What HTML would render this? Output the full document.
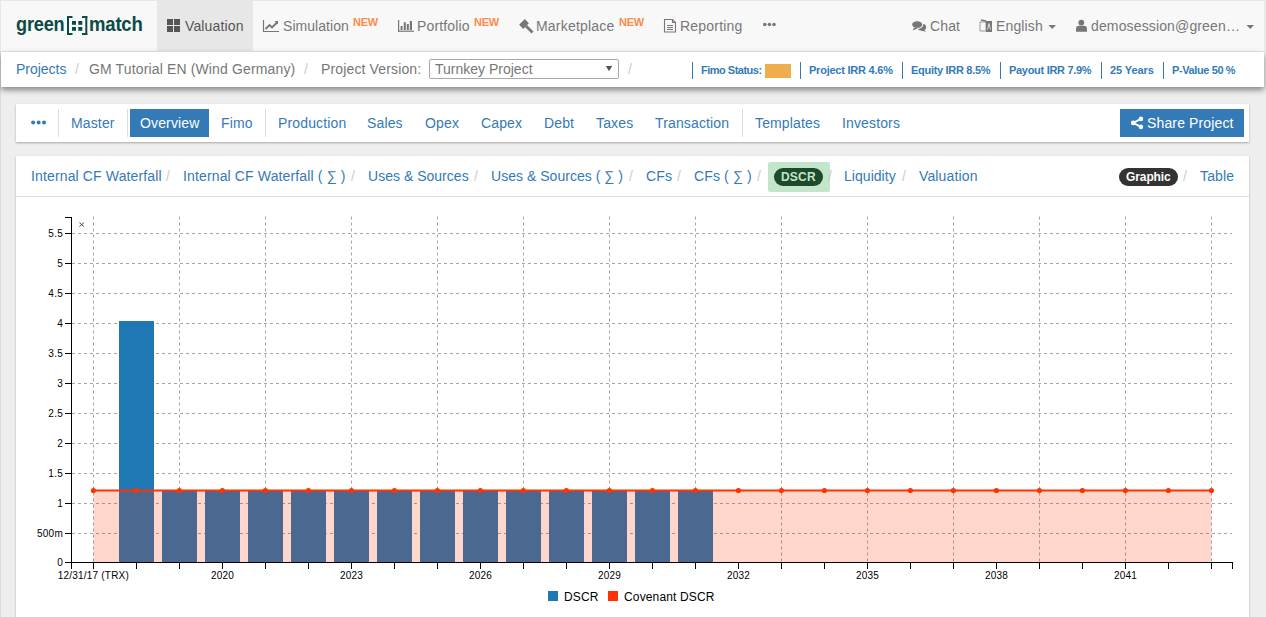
<!DOCTYPE html>
<html><head><meta charset="utf-8">
<style>
*{box-sizing:border-box}
html,body{margin:0;padding:0}
body{width:1266px;height:617px;overflow:hidden;background:#eeeeee;font-family:"Liberation Sans",sans-serif;font-size:14px;position:relative}
.a{position:absolute;white-space:nowrap}
.t{position:absolute;white-space:nowrap;font-size:14px;line-height:18px;letter-spacing:0.14px}
.n{color:#777;top:17px}
.new{position:absolute;top:16px;font-size:11px;font-weight:bold;color:#ff8a4c;line-height:12px;white-space:nowrap}
.b{top:60px}
.kpi{position:absolute;top:64px;font-size:11px;font-weight:bold;color:#337ab7;line-height:12px;white-space:nowrap}
.ks{position:absolute;top:62px;width:1px;height:17px;background:#337ab7}
.tab{color:#337ab7;top:114px}
.sep{position:absolute;top:109px;width:1px;height:28px;background:#ddd}
.h{color:#337ab7;top:167px}
.sl{color:#ccc;top:167px}
svg{position:absolute;left:0;top:0;overflow:visible}
</style></head><body>

<div class="a" style="left:0;top:0;width:1px;height:617px;background:#dcdcdc"></div>
<!-- NAVBAR -->
<div class="a" style="left:0;top:0;width:1265px;height:52px;background:#f8f8f8;border:1px solid #e7e7e7"></div>
<div class="a" style="left:157px;top:1px;width:96px;height:50px;background:#e7e7e7"></div>

<!-- logo -->
<div class="a" style="left:16px;top:12px;font-size:19.5px;font-weight:bold;color:#0a4b45;line-height:24px;letter-spacing:-0.2px;transform:scaleX(0.93);transform-origin:0 0">green</div>
<svg width="1266" height="60">
 <g fill="#0a4b45">
  <rect x="67" y="16" width="2" height="19"/><rect x="67" y="16" width="5.5" height="2"/><rect x="67" y="33" width="5.5" height="2"/>
  <rect x="85.3" y="16" width="2" height="19"/><rect x="82" y="16" width="5.3" height="2"/><rect x="82" y="33" width="5.3" height="2"/>
  <rect x="72" y="21" width="4" height="3.8"/><rect x="78.3" y="21" width="4" height="3.8"/>
  <rect x="72" y="27" width="4" height="3.8"/><rect x="78.3" y="27" width="4" height="3.8"/>
 </g>
</svg>
<div class="a" style="left:89px;top:12px;font-size:19.5px;font-weight:bold;color:#0a4b45;line-height:24px;letter-spacing:-0.2px;transform:scaleX(0.95);transform-origin:0 0">match</div>

<!-- nav icons -->
<svg width="1266" height="60">
 <g fill="#555"><rect x="167" y="19" width="6" height="6"/><rect x="174" y="19" width="6" height="6"/><rect x="167" y="26" width="6" height="6"/><rect x="174" y="26" width="6" height="6"/></g>
 <g fill="none" stroke="#777">
  <path d="M263.5,20V31.5H279" stroke-width="1.2"/>
  <path d="M265.5,29L269.5,25L272,27.5L277,22.5" stroke-width="1.9"/>
 </g>
 <path d="M274.5,21H278V24.5Z" fill="#777"/>
 <g fill="#777">
  <rect x="398" y="20" width="1.2" height="11.5"/><rect x="398" y="30.6" width="16" height="1.2"/>
  <rect x="400.6" y="26" width="2" height="4"/><rect x="403.8" y="22.2" width="2" height="7.8"/><rect x="406.8" y="24" width="2" height="6"/><rect x="409.8" y="21" width="2.2" height="9"/>
 </g>
 <g fill="#777" transform="translate(524,24) rotate(-45)">
  <rect x="-4" y="-2.9" width="8" height="5.8"/>
  <rect x="-1.4" y="2.5" width="2.8" height="9.5"/>
 </g>
 <g fill="none" stroke="#777" stroke-width="1.1">
  <path d="M664.5,19.5H672.5L675.5,22.5V32H664.5Z"/>
  <path d="M672.5,19.5V22.5H675.5"/>
  <path d="M667,25.5H673M667,27.5H673M667,29.5H673"/>
 </g>
 <g fill="#777"><circle cx="764.8" cy="24.5" r="1.8"/><circle cx="769.4" cy="24.5" r="1.8"/><circle cx="774" cy="24.5" r="1.8"/></g>
 <g fill="#777">
  <ellipse cx="921.8" cy="27.2" rx="4.3" ry="3.4"/>
  <path d="M923.5,29.5L926.2,31.8L920.5,30.4Z"/>
  <ellipse cx="917.2" cy="24.6" rx="5.6" ry="3.9" stroke="#f8f8f8" stroke-width="1.1"/>
  <path d="M914,27.5L912.6,30.6L917.5,28.4Z"/>
 </g>
 <g>
  <path d="M980,22H986V31H980Z" fill="none" stroke="#999" stroke-width="1"/>
  <path d="M986,21H992V32H986Z" fill="#777"/>
  <path d="M981,20L986,21" stroke="#777" stroke-width="1.4"/>
  <path d="M987.5,29.5L989,23.5L990.5,29.5" fill="none" stroke="#ddd" stroke-width="1"/>
 </g>
 <path d="M1048.5,25H1056L1052.25,29Z" fill="#777"/>
 <g fill="#777"><circle cx="1081.3" cy="22.6" r="2.9"/><path d="M1076,31.8V28.5Q1076,26 1078.5,25.8H1084.5Q1087,26 1087,28.5V31.8Z"/></g>
 <path d="M1246.5,25H1254L1250.25,29Z" fill="#777"/>
</svg>

<div class="t n" style="left:185px;color:#555">Valuation</div>
<div class="t n" style="left:283px;letter-spacing:0.05px">Simulation</div><div class="new" style="left:353px;letter-spacing:-0.3px">NEW</div>
<div class="t n" style="left:417px">Portfolio</div><div class="new" style="left:474px;letter-spacing:-0.3px">NEW</div>
<div class="t n" style="left:536px;letter-spacing:0.2px">Marketplace</div><div class="new" style="left:619px;letter-spacing:-0.3px">NEW</div>
<div class="t n" style="left:680px;letter-spacing:0.2px">Reporting</div>
<div class="t n" style="left:930px">Chat</div>
<div class="t n" style="left:996px">English</div>
<div class="t n" style="left:1091px">demosession@green…</div>

<!-- BREADCRUMB BAR -->
<div class="a" style="left:1px;top:52px;width:1263px;height:35px;background:#fff;box-shadow:0 3px 6px rgba(0,0,0,.45)"></div>
<div class="t b" style="left:16px;color:#337ab7;letter-spacing:-0.02px">Projects</div>
<div class="t b" style="left:75px;color:#ccc">/</div>
<div class="t b" style="left:89px;color:#777">GM Tutorial EN (Wind Germany)</div>
<div class="t b" style="left:304px;color:#ccc">/</div>
<div class="t b" style="left:321px;color:#777">Project Version:</div>
<div class="a" style="left:429px;top:59px;width:190px;height:20px;border:1px solid #a9a9a9;border-radius:2px;background:#fff"></div>
<div class="t" style="left:435px;top:60px;color:#777;letter-spacing:0">Turnkey Project</div>
<svg width="1266" height="100"><path d="M605.8,66H612.2L609,71.2Z" fill="#555"/></svg>
<div class="t b" style="left:628px;color:#ccc">/</div>

<div class="ks" style="left:692px"></div>
<div class="kpi" style="left:701px;letter-spacing:-0.5px">Fimo Status:</div>
<div class="a" style="left:765px;top:64px;width:26px;height:14px;background:#f0ad4e"></div>
<div class="ks" style="left:800px"></div>
<div class="kpi" style="left:809px;letter-spacing:-0.23px">Project IRR 4.6%</div>
<div class="ks" style="left:902px"></div>
<div class="kpi" style="left:911px;letter-spacing:-0.3px">Equity IRR 8.5%</div>
<div class="ks" style="left:1000px"></div>
<div class="kpi" style="left:1009px;letter-spacing:-0.3px">Payout IRR 7.9%</div>
<div class="ks" style="left:1101px"></div>
<div class="kpi" style="left:1110px;letter-spacing:-0.08px">25 Years</div>
<div class="ks" style="left:1163px"></div>
<div class="kpi" style="left:1172px;letter-spacing:-0.39px">P-Value 50 %</div>

<!-- CARD 1 -->
<div class="a" style="left:16px;top:104px;width:1233px;height:38px;background:#fff;box-shadow:0 1px 2px rgba(0,0,0,.3)"></div>
<svg width="1266" height="200"><g fill="#337ab7"><circle cx="33.1" cy="122.4" r="2"/><circle cx="38.6" cy="122.4" r="2"/><circle cx="44" cy="122.4" r="2"/></g></svg>
<div class="sep" style="left:58px"></div>
<div class="t tab" style="left:71px">Master</div>
<div class="sep" style="left:127px"></div>
<div class="a" style="left:130px;top:109px;width:79px;height:28px;background:#337ab7"></div>
<div class="t tab" style="left:140px;color:#fff">Overview</div>
<div class="t tab" style="left:221px">Fimo</div>
<div class="sep" style="left:265px"></div>
<div class="t tab" style="left:278px">Production</div>
<div class="t tab" style="left:367px">Sales</div>
<div class="t tab" style="left:425px">Opex</div>
<div class="t tab" style="left:481px">Capex</div>
<div class="t tab" style="left:544px">Debt</div>
<div class="t tab" style="left:596px">Taxes</div>
<div class="t tab" style="left:655px">Transaction</div>
<div class="sep" style="left:742px"></div>
<div class="t tab" style="left:755px">Templates</div>
<div class="t tab" style="left:842px">Investors</div>
<div class="a" style="left:1120px;top:109px;width:124px;height:28px;background:#337ab7"></div>
<svg width="1266" height="200"><g fill="#fff" stroke="#fff"><circle cx="1133.2" cy="122.9" r="2.3" stroke="none"/><circle cx="1140.9" cy="118.9" r="2.3" stroke="none"/><circle cx="1140.9" cy="126.9" r="2.3" stroke="none"/><path d="M1133.2,122.9L1140.9,118.9M1133.2,122.9L1140.9,126.9" stroke-width="1.8" fill="none"/></g></svg>
<div class="t tab" style="left:1147px;color:#fff">Share Project</div>

<!-- CARD 2 -->
<div class="a" style="left:16px;top:156px;width:1233px;height:470px;background:#fff;box-shadow:0 1px 2px rgba(0,0,0,.3)"></div>
<div class="a" style="left:16px;top:196px;width:1233px;height:1px;background:#ddd"></div>
<div class="t h" style="left:31px">Internal CF Waterfall</div><div class="t sl" style="left:166px">/</div>
<div class="t h" style="left:183px">Internal CF Waterfall ( ∑ )</div><div class="t sl" style="left:351px">/</div>
<div class="t h" style="left:368px;letter-spacing:0.02px">Uses &amp; Sources</div><div class="t sl" style="left:474px">/</div>
<div class="t h" style="left:491px;letter-spacing:0.03px">Uses &amp; Sources ( ∑ )</div><div class="t sl" style="left:629px">/</div>
<div class="t h" style="left:646px">CFs</div><div class="t sl" style="left:677px">/</div>
<div class="t h" style="left:694px">CFs ( ∑ )</div><div class="t sl" style="left:757px">/</div>
<div class="a" style="left:768px;top:162px;width:62px;height:30px;background:#c3e6cb;border-radius:2px"></div>
<div class="a" style="left:774px;top:168px;width:49px;height:18px;background:#1d4a2a;border-radius:9px"></div>
<div class="a" style="left:781px;top:169px;font-size:12px;font-weight:bold;line-height:16px;color:#c3e6cb;letter-spacing:0.2px">DSCR</div>
<div class="t sl" style="left:828px">/</div>
<div class="t h" style="left:844px;letter-spacing:0.04px">Liquidity</div><div class="t sl" style="left:902px">/</div>
<div class="t h" style="left:919px">Valuation</div>
<div class="a" style="left:1119px;top:168px;width:59px;height:18px;background:#333;border-radius:9px"></div>
<div class="a" style="left:1126px;top:169px;font-size:12px;font-weight:bold;line-height:16px;color:#fff;letter-spacing:-0.1px">Graphic</div>
<div class="t sl" style="left:1183px">/</div>
<div class="t h" style="left:1200px">Table</div>

<!--CHART-->
<svg width="1266" height="617" style="position:absolute;left:0;top:0">
<g stroke="#a6a6a6" stroke-width="1" stroke-dasharray="3,3" shape-rendering="crispEdges" fill="none">
<path d="M72,533.5H1232"/>
<path d="M72,503.5H1232"/>
<path d="M72,473.5H1232"/>
<path d="M72,443.5H1232"/>
<path d="M72,413.5H1232"/>
<path d="M72,383.5H1232"/>
<path d="M72,353.5H1232"/>
<path d="M72,323.5H1232"/>
<path d="M72,293.5H1232"/>
<path d="M72,263.5H1232"/>
<path d="M72,233.5H1232"/>
<path d="M93.5,216.5V562" shape-rendering="auto"/>
<path d="M179.5,216.5V562" shape-rendering="auto"/>
<path d="M265.5,216.5V562" shape-rendering="auto"/>
<path d="M351.5,216.5V562" shape-rendering="auto"/>
<path d="M437.5,216.5V562" shape-rendering="auto"/>
<path d="M523.5,216.5V562" shape-rendering="auto"/>
<path d="M609.5,216.5V562" shape-rendering="auto"/>
<path d="M695.5,216.5V562" shape-rendering="auto"/>
<path d="M781.5,216.5V562" shape-rendering="auto"/>
<path d="M867.5,216.5V562" shape-rendering="auto"/>
<path d="M953.5,216.5V562" shape-rendering="auto"/>
<path d="M1039.5,216.5V562" shape-rendering="auto"/>
<path d="M1125.5,216.5V562" shape-rendering="auto"/>
<path d="M1211.5,216.5V562" shape-rendering="auto"/>
</g>
<g fill="#1f77b4" shape-rendering="crispEdges">
<rect x="119" y="321" width="35" height="241"/>
<rect x="162" y="491" width="35" height="71"/>
<rect x="205" y="491" width="35" height="71"/>
<rect x="248" y="491" width="35" height="71"/>
<rect x="291" y="491" width="35" height="71"/>
<rect x="334" y="491" width="35" height="71"/>
<rect x="377" y="491" width="35" height="71"/>
<rect x="420" y="491" width="35" height="71"/>
<rect x="463" y="491" width="35" height="71"/>
<rect x="506" y="491" width="35" height="71"/>
<rect x="549" y="491" width="35" height="71"/>
<rect x="592" y="491" width="35" height="71"/>
<rect x="635" y="491" width="35" height="71"/>
<rect x="678" y="491" width="35" height="71"/>
</g>
<rect x="93.4" y="490.5" width="1118.0" height="72.0" fill="#ff3300" fill-opacity="0.2"/>
<path d="M93.4,490.5H1211.4" stroke="#ff3300" stroke-width="2" fill="none"/>
<circle cx="93.4" cy="490.5" r="2.6" fill="#ff3300"/>
<circle cx="136.4" cy="490.5" r="2.6" fill="#ff3300"/>
<circle cx="179.4" cy="490.5" r="2.6" fill="#ff3300"/>
<circle cx="222.4" cy="490.5" r="2.6" fill="#ff3300"/>
<circle cx="265.4" cy="490.5" r="2.6" fill="#ff3300"/>
<circle cx="308.4" cy="490.5" r="2.6" fill="#ff3300"/>
<circle cx="351.4" cy="490.5" r="2.6" fill="#ff3300"/>
<circle cx="394.4" cy="490.5" r="2.6" fill="#ff3300"/>
<circle cx="437.4" cy="490.5" r="2.6" fill="#ff3300"/>
<circle cx="480.4" cy="490.5" r="2.6" fill="#ff3300"/>
<circle cx="523.4" cy="490.5" r="2.6" fill="#ff3300"/>
<circle cx="566.4" cy="490.5" r="2.6" fill="#ff3300"/>
<circle cx="609.4" cy="490.5" r="2.6" fill="#ff3300"/>
<circle cx="652.4" cy="490.5" r="2.6" fill="#ff3300"/>
<circle cx="695.4" cy="490.5" r="2.6" fill="#ff3300"/>
<circle cx="738.4" cy="490.5" r="2.6" fill="#ff3300"/>
<circle cx="781.4" cy="490.5" r="2.6" fill="#ff3300"/>
<circle cx="824.4" cy="490.5" r="2.6" fill="#ff3300"/>
<circle cx="867.4" cy="490.5" r="2.6" fill="#ff3300"/>
<circle cx="910.4" cy="490.5" r="2.6" fill="#ff3300"/>
<circle cx="953.4" cy="490.5" r="2.6" fill="#ff3300"/>
<circle cx="996.4" cy="490.5" r="2.6" fill="#ff3300"/>
<circle cx="1039.4" cy="490.5" r="2.6" fill="#ff3300"/>
<circle cx="1082.4" cy="490.5" r="2.6" fill="#ff3300"/>
<circle cx="1125.4" cy="490.5" r="2.6" fill="#ff3300"/>
<circle cx="1168.4" cy="490.5" r="2.6" fill="#ff3300"/>
<circle cx="1211.4" cy="490.5" r="2.6" fill="#ff3300"/>
<g stroke="#000" stroke-width="1" fill="none" shape-rendering="crispEdges">
<path d="M65,217.5H71.5V562.5H65"/>
<path d="M65,562.5H71"/>
<path d="M65,533.5H71"/>
<path d="M65,503.5H71"/>
<path d="M65,473.5H71"/>
<path d="M65,443.5H71"/>
<path d="M65,413.5H71"/>
<path d="M65,383.5H71"/>
<path d="M65,353.5H71"/>
<path d="M65,323.5H71"/>
<path d="M65,293.5H71"/>
<path d="M65,263.5H71"/>
<path d="M65,233.5H71"/>
<path d="M71.5,568.5V562.5H1232.5V568.5"/>
<path d="M93.5,562V568.5"/>
<path d="M136.5,562V568.5"/>
<path d="M179.5,562V568.5"/>
<path d="M222.5,562V568.5"/>
<path d="M265.5,562V568.5"/>
<path d="M308.5,562V568.5"/>
<path d="M351.5,562V568.5"/>
<path d="M394.5,562V568.5"/>
<path d="M437.5,562V568.5"/>
<path d="M480.5,562V568.5"/>
<path d="M523.5,562V568.5"/>
<path d="M566.5,562V568.5"/>
<path d="M609.5,562V568.5"/>
<path d="M652.5,562V568.5"/>
<path d="M695.5,562V568.5"/>
<path d="M738.5,562V568.5"/>
<path d="M781.5,562V568.5"/>
<path d="M824.5,562V568.5"/>
<path d="M867.5,562V568.5"/>
<path d="M910.5,562V568.5"/>
<path d="M953.5,562V568.5"/>
<path d="M996.5,562V568.5"/>
<path d="M1039.5,562V568.5"/>
<path d="M1082.5,562V568.5"/>
<path d="M1125.5,562V568.5"/>
<path d="M1168.5,562V568.5"/>
<path d="M1211.5,562V568.5"/>
</g>
<g font-family="Liberation Sans" font-size="10" fill="#000" text-anchor="end" letter-spacing="0.25">
<text x="63" y="562.5" dy=".35em">0</text>
<text x="63" y="533.5" dy=".35em">500m</text>
<text x="63" y="503.5" dy=".35em">1</text>
<text x="63" y="473.5" dy=".35em">1.5</text>
<text x="63" y="443.5" dy=".35em">2</text>
<text x="63" y="413.5" dy=".35em">2.5</text>
<text x="63" y="383.5" dy=".35em">3</text>
<text x="63" y="353.5" dy=".35em">3.5</text>
<text x="63" y="323.5" dy=".35em">4</text>
<text x="63" y="293.5" dy=".35em">4.5</text>
<text x="63" y="263.5" dy=".35em">5</text>
<text x="63" y="233.5" dy=".35em">5.5</text>
</g>
<g font-family="Liberation Sans" font-size="10" fill="#000" text-anchor="middle" letter-spacing="0.2">
<text x="93.4" y="579">12/31/17 (TRX)</text>
<text x="222.4" y="579">2020</text>
<text x="351.4" y="579">2023</text>
<text x="480.4" y="579">2026</text>
<text x="609.4" y="579">2029</text>
<text x="738.4" y="579">2032</text>
<text x="867.4" y="579">2035</text>
<text x="996.4" y="579">2038</text>
<text x="1125.4" y="579">2041</text>
</g>
<path d="M79.4,222.6L84,226.6M84,222.6L79.4,226.6" stroke="#333" stroke-width="0.85" fill="none"/>
<rect x="548" y="591" width="10" height="10" fill="#1f77b4"/>
<text x="564" y="601" font-family="Liberation Sans" font-size="12" fill="#000" letter-spacing="0.15">DSCR</text>
<rect x="608" y="591" width="10" height="10" fill="#ff3300"/>
<text x="624" y="601" font-family="Liberation Sans" font-size="12" fill="#000" letter-spacing="0.15">Covenant DSCR</text>
</svg>
<!--/CHART-->
</body></html>
